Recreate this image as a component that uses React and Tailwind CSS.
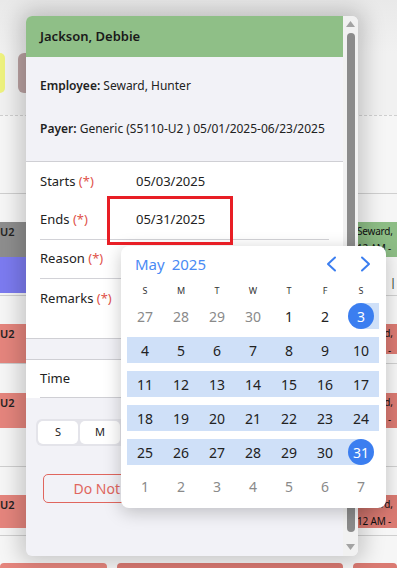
import React from "react";
import { useState } from "react";

const weeks = [
  [["27", 1], ["28", 1], ["29", 1], ["30", 1], ["1"], ["2"], ["3", 0, "sel"]],
  [["4"], ["5"], ["6"], ["7"], ["8"], ["9"], ["10"]],
  [["11"], ["12"], ["13"], ["14"], ["15"], ["16"], ["17"]],
  [["18"], ["19"], ["20"], ["21"], ["22"], ["23"], ["24"]],
  [["25"], ["26"], ["27"], ["28"], ["29"], ["30"], ["31", 0, "sel"]],
  [["1", 1], ["2", 1], ["3", 1], ["4", 1], ["5", 1], ["6", 1], ["7", 1]],
];

function bandClass(w, d) {
  if (w === 0) return d === 6 ? "bg-[linear-gradient(to_right,transparent_36%,#cfe0f8_36%)]" : "";
  if (w === 4 && d === 6) return "bg-[linear-gradient(to_right,#cfe0f8_50%,transparent_50%)]";
  if (w >= 1 && w <= 4) return "bg-[#cfe0f8]";
  return "";
}

function Chevron({ left }) {
  return (
    <svg width="12" height="16" viewBox="0 0 12 16" fill="none">
      <polyline
        points={left ? "10,1.5 3,8 10,14.5" : "2,1.5 9,8 2,14.5"}
        stroke="#3b7ef0"
        strokeWidth="2"
        strokeLinecap="round"
        strokeLinejoin="round"
      />
    </svg>
  );
}

function DatePicker() {
  return (
    <div className="absolute left-[121px] top-[246px] h-[262px] w-[265px] rounded-lg bg-white pt-[8px] shadow-[0_4px_18px_rgba(0,0,0,0.22)]">
      <div className="flex h-[20px] items-center justify-between pl-[14px] pr-[14px]">
        <div className="flex gap-[7px] text-[15px] leading-none text-[#4a8af4]">
          <span>May</span>
          <span>2025</span>
        </div>
        <div className="flex items-center gap-[23px]">
          <Chevron left />
          <Chevron />
        </div>
      </div>
      <div className="mt-[11px] grid h-[12px] grid-cols-[repeat(7,36px)] px-[6px] text-[9px] leading-[12px] text-[#333]">
        {["S", "M", "T", "W", "T", "F", "S"].map((d, i) => (
          <div key={i} className="text-center">
            {d}
          </div>
        ))}
      </div>
      <div className="mt-[6px] flex flex-col gap-[8px] px-[5px]">
        {weeks.map((wk, w) => (
          <div key={w} className="grid h-[26px] grid-cols-[repeat(7,36px)] pl-[1px]">
            {wk.map(([n, muted, sel], d) => (
              <div key={d} className={"flex items-center justify-center " + bandClass(w, d)}>
                {sel ? (
                  <span className="flex h-[26px] w-[26px] items-center justify-center rounded-full bg-[#3b7ef0] text-[14px] text-white">
                    {n}
                  </span>
                ) : (
                  <span className={"text-[14px] " + (muted ? "text-[#8a8a8a]" : "text-[#222]")}>{n}</span>
                )}
              </div>
            ))}
          </div>
        ))}
      </div>
    </div>
  );
}

function FormRow({ label, value, border, h = "h-[39px]" }) {
  return (
    <div className={"mx-[14px] flex items-center text-[13px] text-[#222] " + h + (border ? " border-b border-[#d2d2d7]" : "")}>
      <div className="w-[96px]">
        {label} <span className="text-[#e0524a]">(*)</span>
      </div>
      <div>{value}</div>
    </div>
  );
}

function Modal() {
  const [days] = useState(["S", "M", "T", "W", "T", "F", "S"]);
  return (
    <div className="absolute left-[26px] top-[16px] flex h-[540px] w-[332px] overflow-hidden rounded-md bg-[#f2f2f7] shadow-[0_0_22px_6px_rgba(0,0,0,0.2)]">
      <div className="flex w-[317px] flex-col">
        <div className="flex h-[41px] items-center bg-[#8fbf87] px-[14px] text-[13px] font-semibold text-[#1a1a1a]">
          Jackson, Debbie
        </div>
        <div className="h-[105px] border-b border-[#cfcfd4] px-[14px] pt-[20px] text-[12px] text-[#222]">
          <div className="leading-[18px]">
            <span className="font-semibold">Employee:</span> Seward, Hunter
          </div>
          <div className="mt-[25px] leading-[18px]">
            <span className="font-semibold">Payer:</span> Generic (S5110-U2 ) 05/01/2025-06/23/2025
          </div>
        </div>
        <div className="border-b border-[#cfcfd4] bg-white">
          <FormRow label="Starts" value="05/03/2025" />
          <FormRow label="Ends" value="05/31/2025" border />
          <FormRow label="Reason" value="" border />
          <div className="mx-[14px] h-[59px] pt-[10px] text-[13px] leading-[18px] text-[#222]">
            Remarks <span className="text-[#e0524a]">(*)</span>
          </div>
        </div>
        <div className="h-[21px] border-b border-[#cfcfd4]" />
        <div className="bg-white">
          <div className="mx-[14px] flex h-[38px] items-center border-b border-[#cfcfd4] text-[13px] text-[#222]">
            Time
          </div>
        </div>
        <div className="flex-1">
          <div className="ml-[10px] mt-[21px] inline-flex gap-[2px] rounded-md bg-[#e4e4ea] p-[2px]">
            {days.map((d, i) => (
              <div key={i} className="flex h-[23px] w-[40px] items-center justify-center rounded-[5px] bg-white text-[11px] text-[#222]">
                {d}
              </div>
            ))}
          </div>
          <div className="ml-[17px] mt-[28px] flex h-[29px] w-[131px] items-center justify-center rounded-[5px] border border-[#e0665e] text-[14px] text-[#e0665e]">
            Do Not Bill
          </div>
        </div>
      </div>
      <div className="flex w-[15px] flex-col items-center bg-[#f1f1f1] pt-[5px]">
        <svg width="9" height="6" viewBox="0 0 9 6">
          <polygon points="4.5,0 9,6 0,6" fill="#a3a3a3" />
        </svg>
        <div className="mt-[6px] h-[499px] w-[8px] rounded-full bg-[#8b8b8b]" />
        <svg className="mt-[12px]" width="9" height="6" viewBox="0 0 9 6">
          <polygon points="0,0 9,0 4.5,6" fill="#a3a3a3" />
        </svg>
      </div>
    </div>
  );
}

function EventRow({ h, left, right, border }) {
  return (
    <div className={"flex justify-between " + h + (border ? " border-t border-[#cfcfcf]" : "")}>
      <div className="w-[26px]">{left}</div>
      <div className="w-[40px]">{right}</div>
    </div>
  );
}

const leftEvent = (bg, h, text) => (
  <div className={"pt-[3px] text-[11px] font-semibold leading-[14px] text-[#222] " + bg + " " + h}>{text}</div>
);

const rightEvent = (bg, h) => (
  <div className={"overflow-hidden whitespace-nowrap pt-[1px] text-[10px] leading-[17px] tracking-[-0.2px] text-[#111] " + bg + " " + h}>
    <div>Seward,</div>
    <div>12 AM -</div>
  </div>
);

export default function App() {
  return (
    <div
      className="relative h-[568px] w-[397px] overflow-hidden bg-[#f6f6f6]"
      style={{ fontFamily: "'Noto Sans', 'Open Sans', sans-serif" }}
    >
      <div className="flex h-full flex-col">
        <div className="h-[53px] bg-gradient-to-b from-[#e9e9e9] to-[#f1f1f1]" />
        <div className="flex h-[40px] bg-[#f1f1f1]">
          <div className="w-[5px] rounded-r-md bg-[#eef27e]" />
          <div className="ml-[13px] w-[14px] rounded-l-md bg-[#b9a1a1]" />
        </div>
        <div className="h-[22px] bg-[#f1f1f1]" />
        <div className="h-[78px] border-t border-dashed border-[#cfcfcf]" />
        <EventRow h="h-[29px]" border />
        <EventRow
          h="h-[35px]"
          left={leftEvent("bg-[#8e8e8e]", "h-[35px]", "U2")}
          right={rightEvent("bg-[#8dbd85]", "h-[35px]")}
        />
        <EventRow
          h="h-[38px]"
          left={<div className="h-[36px] bg-[#7c7bf0]" />}
          right={<div className="pr-[1px] pt-[20px] text-right text-[11px] leading-[10px] text-[#222]">|</div>}
        />
        <EventRow h="h-[29px]" border />
        <EventRow
          h="h-[39px]"
          left={leftEvent("bg-[#e5857d]", "h-[39px]", "U2")}
          right={rightEvent("bg-[#da7a72]", "h-[30px]")}
        />
        <EventRow h="h-[30px]" border />
        <EventRow
          h="h-[35px]"
          left={leftEvent("bg-[#e5857d]", "h-[35px]", "U2")}
          right={rightEvent("bg-[#da7a72]", "h-[35px]")}
        />
        <div className="h-[38px]" />
        <EventRow h="h-[29px]" border />
        <EventRow
          h="h-[33px]"
          left={leftEvent("bg-[#e5857d]", "h-[33px]", "U2")}
          right={rightEvent("bg-[#da7a72]", "h-[33px]")}
        />
        <div className="h-[7px]" />
        <EventRow h="h-[28px]" border />
        <div className="flex h-[5px] gap-[10px]">
          <div className="w-[107px] rounded-t-sm bg-[#e5857d]" />
          <div className="w-[226px] rounded-t-sm bg-[#da7a72]" />
          <div className="flex-1 rounded-t-sm bg-[#da7a72]" />
        </div>
      </div>
      <Modal />
      <DatePicker />
      <div className="absolute left-[107px] top-[196px] h-[49px] w-[126px] border-[3px] border-[#e81e25]" />
    </div>
  );
}
